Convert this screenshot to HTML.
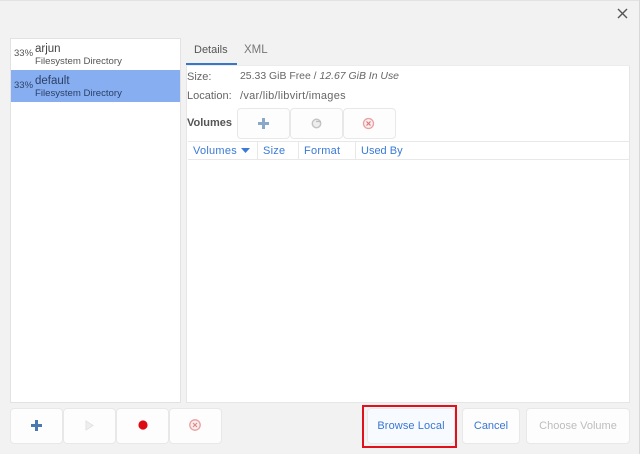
<!DOCTYPE html>
<html>
<head>
<meta charset="utf-8">
<style>
html,body{margin:0;padding:0}
body{width:640px;height:454px;background:#f2f2f2;overflow:hidden;position:relative;font-family:"Liberation Sans",sans-serif;color:#444}
.a{position:absolute}
.t{position:absolute;white-space:nowrap;line-height:14px;filter:blur(.25px)}
.btn{position:absolute;background:#fdfdfd;border:1px solid #e8e8e8;border-radius:4px;box-sizing:border-box}
.lbl{display:flex;align-items:center;justify-content:center;font-size:11px;color:#3a76d2}
svg{position:absolute;overflow:visible;filter:blur(.3px)}
</style>
</head>
<body>
<div class="a" style="left:0;top:0;width:640px;height:1px;background:#e2e2e2"></div>
<div class="a" style="right:0;top:0;width:1px;height:454px;background:#d8d8d8"></div>

<svg style="left:617px;top:8px" width="12" height="12"><path d="M1 1L10 10M10 1L1 10" stroke="#555" stroke-width="1.4" fill="none"/></svg>

<!-- left list -->
<div class="a" style="left:10px;top:38px;width:171px;height:365px;background:#fff;border:1px solid #e2e2e2;box-sizing:border-box"></div>
<div class="a" style="left:11px;top:70px;width:169px;height:32px;background:#86aef0"></div>
<div class="t" style="left:14px;top:47px;font-size:9.5px;color:#555">33%</div>
<div class="t" style="left:35px;top:42px;font-size:11.5px;color:#444">arjun</div>
<div class="t" style="left:35px;top:55px;font-size:9.6px;color:#555">Filesystem Directory</div>
<div class="t" style="left:14px;top:79px;font-size:9.5px;color:#2f4468">33%</div>
<div class="t" style="left:35px;top:74px;font-size:11.5px;color:#2b3f66">default</div>
<div class="t" style="left:35px;top:87px;font-size:9.6px;color:#2b3f66">Filesystem Directory</div>

<!-- tabs -->
<div class="t" style="left:194px;top:43px;font-size:11px;color:#555">Details</div>
<div class="t" style="left:244px;top:43px;font-size:11.5px;color:#777">XML</div>
<div class="a" style="left:186px;top:63px;width:51px;height:2px;background:#3a76c8"></div>

<!-- right panel -->
<div class="a" style="left:186px;top:65px;width:444px;height:338px;background:#fff;border:1px solid #e6e6e6;border-top:0;box-sizing:border-box"></div>
<div class="a" style="left:186px;top:65px;width:444px;height:1px;background:#ececec"></div>
<div class="t" style="left:187px;top:70px;font-size:11px;color:#666">Size:</div>
<div class="t" style="left:240px;top:70px;font-size:10.45px;color:#666">25.33 GiB Free / <i>12.67 GiB In Use</i></div>
<div class="t" style="left:187px;top:89px;font-size:11px;color:#666">Location:</div>
<div class="t" style="left:240px;top:89px;font-size:11px;letter-spacing:.27px;color:#666">/var/lib/libvirt/images</div>
<div class="t" style="left:187px;top:116px;font-size:11px;font-weight:bold;color:#555">Volumes</div>

<div class="btn" style="left:237px;top:108px;width:53px;height:31px"></div>
<div class="btn" style="left:290px;top:108px;width:53px;height:31px"></div>
<div class="btn" style="left:343px;top:108px;width:53px;height:31px"></div>
<svg style="left:257px;top:117px" width="13" height="13"><path d="M6.5 1V12M1 6.5H12" stroke="#8aa8c8" stroke-width="3" fill="none"/></svg>
<svg style="left:310px;top:117px" width="13" height="13"><circle cx="6.5" cy="6.5" r="4.2" stroke="#c4c4c4" stroke-width="1.5" fill="#eee"/><path d="M6 4.5H11" stroke="#bbb" stroke-width="1.2"/></svg>
<svg style="left:362px;top:117px" width="13" height="13"><circle cx="6.5" cy="6.5" r="5" stroke="#e8a0a0" stroke-width="1.3" fill="#fbeeee"/><path d="M4.5 4.5L8.5 8.5M8.5 4.5L4.5 8.5" stroke="#dd7777" stroke-width="1.2"/></svg>

<!-- table header -->
<div class="a" style="left:188px;top:141px;width:441px;height:1px;background:#e8e8e8"></div>
<div class="a" style="left:188px;top:159px;width:441px;height:1px;background:#e8e8e8"></div>
<div class="a" style="left:257px;top:142px;width:1px;height:17px;background:#e8e8e8"></div>
<div class="a" style="left:298px;top:142px;width:1px;height:17px;background:#e8e8e8"></div>
<div class="a" style="left:355px;top:142px;width:1px;height:17px;background:#e8e8e8"></div>
<div class="t" style="left:193px;top:144px;font-size:11px;letter-spacing:.25px;color:#3a7ad8">Volumes</div>
<svg style="left:241px;top:148px" width="10" height="6"><path d="M0 0H9L4.5 5Z" fill="#3a7ad8"/></svg>
<div class="t" style="left:263px;top:144px;font-size:11px;letter-spacing:.25px;color:#3a7ad8">Size</div>
<div class="t" style="left:304px;top:144px;font-size:11px;letter-spacing:.25px;color:#3a7ad8">Format</div>
<div class="t" style="left:361px;top:144px;font-size:11px;color:#3a7ad8">Used By</div>

<!-- bottom left buttons -->
<div class="btn" style="left:10px;top:408px;width:53px;height:36px"></div>
<div class="btn" style="left:63px;top:408px;width:53px;height:36px"></div>
<div class="btn" style="left:116px;top:408px;width:53px;height:36px"></div>
<div class="btn" style="left:169px;top:408px;width:53px;height:36px"></div>
<svg style="left:30px;top:419px" width="13" height="13"><path d="M6.5 1V12M1 6.5H12" stroke="#4a78b0" stroke-width="3" fill="none"/></svg>
<svg style="left:85px;top:420px" width="10" height="11"><path d="M1 1L8 5.5L1 10Z" fill="#eee" stroke="#e2e2e2"/></svg>
<svg style="left:137px;top:419px" width="12" height="12"><circle cx="6" cy="6" r="4.6" fill="#dd0b14"/></svg>
<svg style="left:188px;top:418px" width="14" height="14"><circle cx="7" cy="7" r="5.2" stroke="#e8a0a0" stroke-width="1.3" fill="#fbeeee"/><path d="M5 5L9 9M9 5L5 9" stroke="#dd8888" stroke-width="1.2"/></svg>

<!-- bottom right buttons -->
<div class="btn lbl" style="left:367px;top:408px;width:88px;height:36px;letter-spacing:.1px;background:#f7faff"><span style="filter:blur(.25px)">Browse Local</span></div>
<div class="a" style="left:362px;top:405px;width:95px;height:43px;border:2px solid #e0101c;box-sizing:border-box"></div>
<div class="btn lbl" style="left:462px;top:408px;width:58px;height:36px"><span style="filter:blur(.25px)">Cancel</span></div>
<div class="btn lbl" style="left:526px;top:408px;width:104px;height:36px;color:#bdbdbd"><span style="filter:blur(.25px)">Choose Volume</span></div>
</body>
</html>
